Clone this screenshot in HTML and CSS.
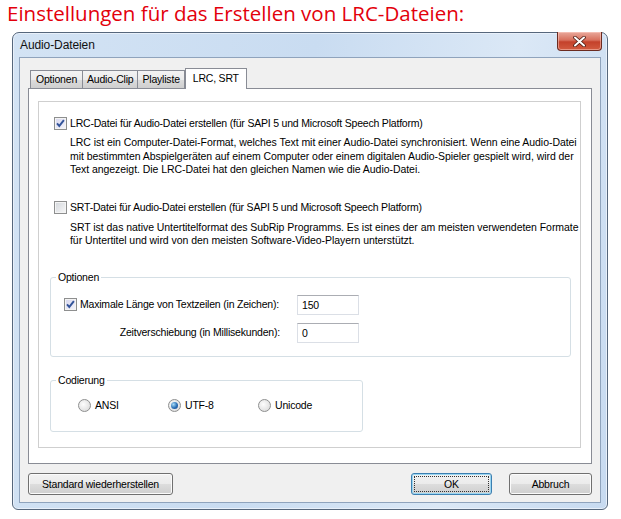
FILE: index.html
```html
<!DOCTYPE html>
<html lang="de">
  <head>
    <meta charset="UTF-8" />
    <title>Audio-Dateien</title>
    <link rel="stylesheet" href="styles.css">
  </head>
  <body>
    <h1 class="headline">Einstellungen für das Erstellen von LRC-Dateien:</h1>
    <div class="window">
      <div class="titlebar">
        <span class="caption">Audio-Dateien</span>
        <span class="close">
          <svg width="13" height="11" viewBox="0 0 13 11">
            <path d="M2 1.5l9 8M11 1.5l-9 8" stroke="#4a1a12" stroke-width="3.6" stroke-linecap="round" />
            <path d="M2 1.5l9 8M11 1.5l-9 8" stroke="#fff" stroke-width="2" stroke-linecap="round" />
          </svg>
        </span>
      </div>
      <div class="client">
        <ul class="tab_list">
          <li>Optionen</li>
          <li>Audio-Clip</li>
          <li>Playliste</li>
          <li class="current">LRC, SRT</li>
        </ul>
        <div class="tab_page">
          <div class="panel">
            <div class="check">
              <span class="box checked">
                <svg width="11" height="11" viewBox="0 0 11 11"><path d="M2 5.3l2.3 2.6 4.6-5.8" fill="none" stroke="#33549a" stroke-width="1.9" /></svg>
              </span>
              LRC-Datei für Audio-Datei erstellen (für SAPI 5 und Microsoft Speech Platform)
            </div>
            <p class="desc desc_first">LRC ist ein Computer-Datei-Format, welches Text mit einer Audio-Datei synchronisiert. Wenn eine Audio-Datei<br>mit bestimmten Abspielgeräten auf einem Computer oder einem digitalen Audio-Spieler gespielt wird, wird der<br>Text angezeigt. Die LRC-Datei hat den gleichen Namen wie die Audio-Datei.</p>

            <div class="check check_second">
              <span class="box"></span>
              SRT-Datei für Audio-Datei erstellen (für SAPI 5 und Microsoft Speech Platform)
            </div>
            <p class="desc">SRT ist das native Untertitelformat des SubRip Programms. Es ist eines der am meisten verwendeten Formate<br>für Untertitel und wird von den meisten Software-Video-Playern unterstützt.</p>

            <fieldset class="group group_opts">
              <legend>Optionen</legend>
              <div class="field_row field_first">
                <div class="field_label">
                  <span class="box checked">
                    <svg width="11" height="11" viewBox="0 0 11 11"><path d="M2 5.3l2.3 2.6 4.6-5.8" fill="none" stroke="#33549a" stroke-width="1.9" /></svg>
                  </span>
                  Maximale Länge von Textzeilen (in Zeichen):
                </div>
                <div class="input">150</div>
              </div>
              <div class="field_row">
                <div class="field_label field_right">Zeitverschiebung (in Millisekunden):</div>
                <div class="input">0</div>
              </div>
            </fieldset>

            <fieldset class="group group_enc">
              <legend>Codierung</legend>
              <div class="radios">
                <div class="radio"><span class="dot"></span>ANSI</div>
                <div class="radio"><span class="dot on"></span>UTF-8</div>
                <div class="radio"><span class="dot"></span>Unicode</div>
              </div>
            </fieldset>
          </div>
        </div>
        <div class="buttons">
          <div class="btn btn_std">Standard wiederherstellen</div>
          <div class="btn btn_ok"><span>OK</span></div>
          <div class="btn btn_cancel">Abbruch</div>
        </div>
      </div>
    </div>
  </body>
</html>
```

FILE: styles.css
```css
* {
  margin: 0;
  padding: 0;
  box-sizing: border-box;
}

body {
  background-color: #fff;
  font-family: "Liberation Sans", Arial, sans-serif;
  font-size: 10.5px;
  letter-spacing: -0.2px;
  line-height: 13px;
  color: #000;
}

li {
  list-style-type: none;
}

.headline {
  height: 32px;
  padding-left: 7px;
  font-family: "Open Sans", sans-serif;
  font-size: 20.5px;
  font-weight: normal;
  letter-spacing: 0;
  line-height: 26px;
  color: #e3000b;
}

/* fenster */
.window {
  display: flex;
  flex-direction: column;
  width: 596px;
  height: 478px;
  margin-left: 12px;
  padding: 0 6px 6px;
  border: 1px solid #56677c;
  border-radius: 7px 7px 6px 6px;
  background: linear-gradient(100deg, #d3e3f4 0%, #c9dcf1 45%, #dbe8f6 75%, #c7daf0 100%);
  box-shadow: inset 0 0 0 1px #e8f0fa;
}

.titlebar {
  display: flex;
  align-items: flex-start;
  height: 24px;
}

.caption {
  padding-left: 1px;
  font-size: 12px;
  letter-spacing: -0.1px;
  line-height: 24px;
  color: #111;
}

.close {
  display: flex;
  align-items: center;
  justify-content: center;
  width: 45px;
  height: 19px;
  margin: -1px -1px 0 auto;
  border: 1px solid #6b2b20;
  border-top: none;
  border-radius: 0 0 4px 4px;
  background: linear-gradient(#e9a99c, #d8705d 45%, #c4412b 55%, #d25b40);
  box-shadow: inset 0 0 0 1px rgba(255, 210, 200, 0.5);
}

.client {
  flex: 1;
  display: flex;
  flex-direction: column;
  padding: 10px 8px 7px 8px;
  border: 1px solid #8fa3bc;
  background-color: #f0f0f0;
}

/* tabs */
.tab_list {
  display: flex;
  align-items: flex-end;
  height: 20px;
  padding-left: 2px;
}

.tab_list li {
  height: 18px;
  padding: 0 4px;
  border: 1px solid #898c95;
  border-bottom: none;
  border-left: none;
  line-height: 17px;
  background: linear-gradient(#f3f3f3, #ebebeb 50%, #dddddd 50%, #cfcfcf);
}

.tab_list li:first-child {
  padding: 0 5px;
  border-left: 1px solid #898c95;
}

.tab_list .current {
  position: relative;
  z-index: 1;
  height: 21px;
  margin: 0 0 -1px 0;
  padding: 0 7px;
  border-left: 1px solid #898c95;
  line-height: 19px;
  background: #fff;
}

.tab_page {
  height: 376px;
  padding: 12px 0 0 9px;
  border: 1px solid #898c95;
  background-color: #fff;
}

.panel {
  width: 543px;
  height: 347px;
  padding: 15px 0 0 15px;
  border: 1px solid #cfcfcf;
}

/* checkbox + radio */
.box {
  display: inline-flex;
  align-items: center;
  justify-content: center;
  flex: none;
  width: 13px;
  height: 13px;
  border: 1px solid #8e8f8f;
  background: linear-gradient(135deg, #d3d7dc, #f7f7f7);
  box-shadow: inset 0 0 0 1px #f4f4f4;
}

.box.checked {
  background: linear-gradient(135deg, #d6d6ee, #f6f6fb);
}

.check {
  display: flex;
  align-items: center;
  gap: 3px;
  height: 13px;
}

.check_second {
  margin-top: 24px;
}

.desc {
  margin: 7px 0 0 16px;
  letter-spacing: -0.05px;
  line-height: 13.5px;
  white-space: nowrap;
}

.desc_first {
  margin-top: 6px;
}

.group {
  border: 1px solid #d5dfe5;
  border-radius: 3px;
}

.group legend {
  margin-left: 5px;
  padding: 0 2px;
  line-height: 13px;
}

.group_opts {
  width: 521px;
  margin: 23px 0 0 -4px;
  padding: 0 0 13px;
}

.field_row {
  display: flex;
  align-items: center;
  height: 20px;
  margin-top: 8px;
}

.field_first {
  margin-top: 11px;
}

.field_label {
  display: flex;
  align-items: center;
  gap: 3px;
  width: 246px;
  padding: 0 17px 0 13px;
  white-space: nowrap;
}

.field_right {
  justify-content: flex-end;
}

.input {
  width: 62px;
  height: 20px;
  padding-left: 4px;
  border: 1px solid #dbdfe6;
  border-top-color: #abadb3;
  line-height: 18px;
  background-color: #fff;
}

.group_enc {
  width: 313px;
  margin: 17px 0 0 -4px;
  padding: 0 0 19px;
}

.radios {
  display: flex;
  margin: 12px 0 0 27px;
}

.radio {
  display: flex;
  align-items: center;
  gap: 4px;
  width: 90px;
  height: 13px;
}

.dot {
  display: inline-flex;
  align-items: center;
  justify-content: center;
  width: 13px;
  height: 13px;
  border: 1px solid #8e8f8f;
  border-radius: 50%;
  background: radial-gradient(circle at 40% 40%, #fdfdfd, #d5d5d5);
}

.dot.on::after {
  content: "";
  width: 7px;
  height: 7px;
  border-radius: 50%;
  background: radial-gradient(circle at 35% 35%, #a8dcf8, #2a6fb5 55%, #163f86);
}

/* buttons */
.buttons {
  display: flex;
  height: 22px;
  margin-top: 9px;
}

.btn {
  display: flex;
  align-items: center;
  justify-content: center;
  height: 22px;
  border: 1px solid #707070;
  border-radius: 3px;
  background: linear-gradient(#f2f2f2, #ebebeb 50%, #dddddd 50%, #cfcfcf);
  box-shadow: inset 0 0 0 1px #fbfbfb;
}

.btn_std {
  width: 145px;
}

.btn_ok {
  width: 81px;
  margin-left: auto;
  border-color: #3c7fb1;
  box-shadow: inset 0 0 0 1px #9bd6f1;
}

.btn_ok span {
  display: flex;
  align-items: center;
  justify-content: center;
  width: 73px;
  height: 14px;
  outline: 1px dotted #333;
}

.btn_cancel {
  width: 83px;
  margin-left: 17px;
}
```
